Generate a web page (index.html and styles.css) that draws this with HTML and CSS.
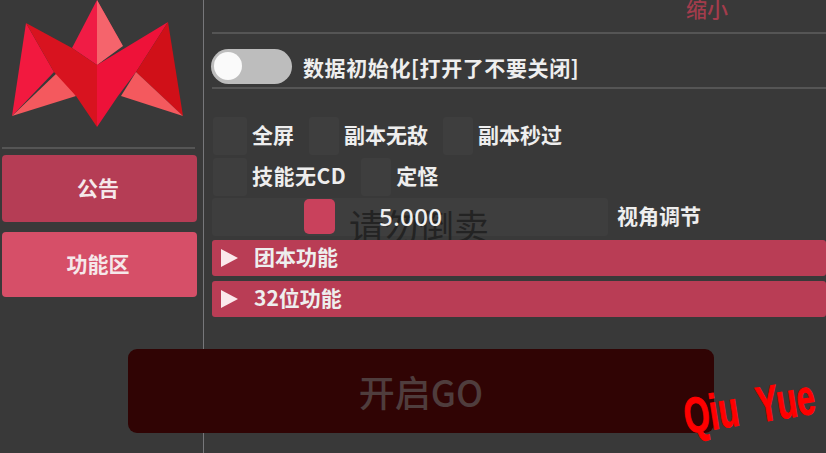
FILE: index.html
```html
<!DOCTYPE html>
<html lang="zh">
<head>
<meta charset="utf-8">
<title>菜单</title>
<link rel="stylesheet" href="styles.css">
</head>
<body>
<div class="app">
  <aside class="sidebar">
    <svg class="logo" viewBox="0 0 190 130" width="190" height="130">
      <polygon points="97,0 72,48 97,65 122,45" fill="#f01c45"/>
      <polygon points="97,0 97,65 123,46" fill="#f5646c"/>
      <polygon points="26,23 12,116 54,72" fill="#f2193f"/>
      <polygon points="12,116 76,96 58,72" fill="#f4595e"/>
      <polygon points="26,23 72,48 97,65 97,127 76,96 54,72" fill="#d8131f"/>
      <polygon points="97,65 168,22 136,72 118,96 97,127" fill="#ee1239"/>
      <polygon points="168,22 136,72 183,116" fill="#d01018"/>
      <polygon points="183,116 136,72 121,96" fill="#f4595e"/>
    </svg>
    <div class="side-rule"></div>
    <button class="side-btn side-btn-dim">公告</button>
    <button class="side-btn side-btn-lit">功能区</button>
  </aside>
  <main class="main">
    <div class="shrink-row"><span class="shrink">缩小</span></div>
    <div class="rule"></div>
    <div class="toggle-row">
      <span class="toggle"><span class="knob"></span></span>
      <span class="label label-wide">数据初始化[打开了不要关闭]</span>
    </div>
    <div class="rule rule-tight"></div>
    <div class="check-row check-row-first">
      <span class="check"></span><span class="label">全屏</span>
      <span class="check"></span><span class="label">副本无敌</span>
      <span class="check"></span><span class="label">副本秒过</span>
    </div>
    <div class="check-row">
      <span class="check"></span><span class="label label-cd">技能无CD</span>
      <span class="check"></span><span class="label">定怪</span>
    </div>
    <div class="slider-row">
      <div class="slider">
        <span class="slider-knob"></span>
        <span class="slider-value">5.000</span>
        <span class="ghost">请勿倒卖</span>
      </div>
      <span class="label">视角调节</span>
    </div>
    <div class="accordion"><span class="arrow"></span><span class="label">团本功能</span></div>
    <div class="accordion"><span class="arrow"></span><span class="label">32位功能</span></div>
  </main>
  <div class="go">开启GO</div>
  <div class="stamp">Qiu Yue</div>
</div>
</body>
</html>
```

FILE: styles.css
```css
* { box-sizing: border-box; }
html, body { margin: 0; height: 100%; }
body {
  background: #393939;
  overflow: hidden;
  font-family: "Noto Sans CJK SC", "Noto Sans", sans-serif;
}
.app {
  position: relative;
  display: flex;
  width: 826px;
  height: 453px;
  overflow: hidden;
}
.sidebar {
  width: 204px;
  flex: none;
  border-right: 1px solid #77777a;
  padding: 0 0 0 2px;
  display: flex;
  flex-direction: column;
}
.logo { display: block; height: 130px; flex: none; margin-left: -2px; }
.side-rule {
  width: 193px;
  height: 2px;
  margin-top: 17px;
  background: #555;
}
.side-btn {
  display: block;
  width: 195px;
  border: 0;
  border-radius: 4px;
  color: #f5e8ea;
  font: 700 21px "Noto Sans CJK SC", sans-serif;
  padding: 0 3px 4px 0;
}
.side-btn-dim { height: 67px; margin-top: 6px; background: #b53d55; }
.side-btn-lit { height: 65px; margin-top: 10px; background: #d64f68; }
.main {
  flex: 1;
  min-width: 0;
  padding-left: 8px;
  display: flex;
  flex-direction: column;
}
.shrink-row { height: 32px; padding-left: 474px; line-height: 16px; }
.shrink { color: #a33c4c; font-size: 21px; font-weight: 500; }
.rule { height: 2px; background: #555; flex: none; }
.rule-tight { margin-top: 3px; }
.label {
  color: #eeeeee;
  font-size: 21px;
  font-weight: 700;
  line-height: 24px;
  margin-bottom: 4px;
  white-space: nowrap;
}
.label-wide { letter-spacing: 0.6px; margin-bottom: 0; }
.label-cd { letter-spacing: 0.5px; }
.toggle-row {
  display: flex;
  align-items: center;
  gap: 11px;
  margin-top: 15px;
  margin-left: -1px;
  height: 35px;
}
.toggle {
  width: 81px;
  height: 35px;
  border-radius: 18px;
  background: #bdbdbd;
  padding: 3px 0 0 3px;
  flex: none;
}
.knob {
  display: block;
  width: 28px;
  height: 28px;
  border-radius: 50%;
  background: #fafafa;
}
.check-row {
  display: flex;
  align-items: center;
  height: 41px;
  margin-left: 1px;
}
.check-row-first { margin-top: 26px; }
.check {
  width: 30px;
  height: 38px;
  margin-right: 5px;
  background: #3e3e3e;
  border-radius: 3px;
  flex: none;
}
.check:first-child { width: 34px; }
.check-row .label + .check { margin-left: 15px; }
.slider-row {
  display: flex;
  align-items: center;
  gap: 9px;
  margin-top: 1px;
  height: 38px;
}
.slider {
  position: relative;
  z-index: 0;
  width: 396px;
  height: 38px;
  background: #3e3e3e;
  border-radius: 3px;
  flex: none;
}
.slider-knob {
  position: absolute;
  left: 92px;
  top: 1px;
  width: 31px;
  height: 35px;
  border-radius: 5px;
  background: #c9415c;
}
.slider-value {
  position: absolute;
  left: 167px;
  top: 4px;
  color: #f0f0f0;
  font: 500 24px/30px "Noto Sans", sans-serif;
  letter-spacing: 0.4px;
}
.ghost {
  position: absolute;
  left: 137px;
  top: 7px;
  color: #232323;
  font-size: 35px;
  line-height: 40px;
  z-index: -1;
  white-space: nowrap;
}
.accordion {
  position: relative;
  z-index: 1;
  display: flex;
  align-items: center;
  height: 36px;
  margin-top: 4px;
  padding-left: 9px;
  gap: 16px;
  background: #b93d55;
  border-radius: 3px;
  flex: none;
}
.accordion + .accordion { margin-top: 5px; }
.arrow {
  width: 0;
  height: 0;
  border-left: 17px solid #fbe9ec;
  border-top: 9px solid transparent;
  border-bottom: 9px solid transparent;
}
.go {
  position: absolute;
  z-index: 2;
  left: 128px;
  top: 349px;
  width: 586px;
  height: 84px;
  border-radius: 9px;
  background: #300404;
  color: #4f3d3d;
  font-size: 36px;
  font-weight: 500;
  display: flex;
  align-items: center;
  justify-content: center;
}
.stamp {
  position: absolute;
  z-index: 3;
  left: 684px;
  top: 391px;
  color: #ff0000;
  font: 700 50px/52px "Liberation Sans", sans-serif;
  transform: rotate(-9deg) scaleX(0.66);
  transform-origin: left center;
  white-space: pre;
  word-spacing: 15px;
  -webkit-text-stroke: 1px #ff0000;
}
```
